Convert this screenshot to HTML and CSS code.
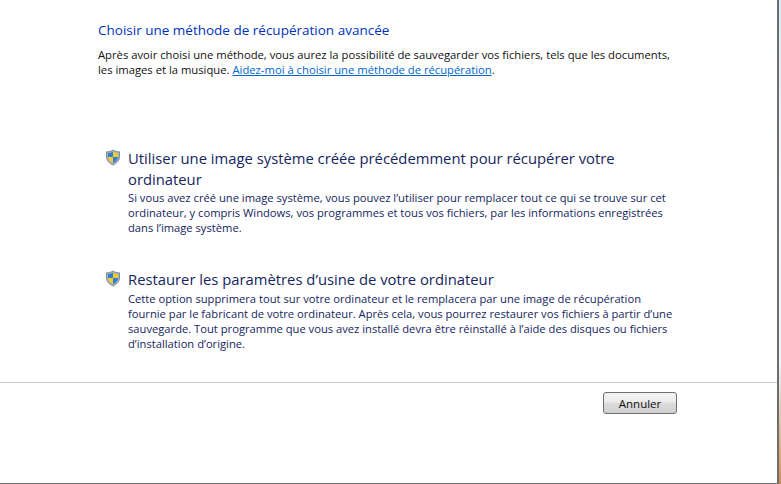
FILE: index.html
```html
<!DOCTYPE html>
<html lang="fr">
<head>
  <meta charset="UTF-8">
  <title>Récupération avancée</title>
  <link rel="stylesheet" href="styles.css">
</head>
<body>
  <div class="window">
    <div class="content">
      <h1>Choisir une méthode de récupération avancée</h1>
      <p class="intro">Après avoir choisi une méthode, vous aurez la possibilité de sauvegarder vos fichiers, tels que les documents,<br>les images et la musique. <a href="#">Aidez-moi à choisir une méthode de récupération</a>.</p>

      <div class="option first">
        <svg class="shield" viewBox="0 0 16 16" aria-hidden="true">
          <path d="M8 .5 C6 1.8 4 2.3 1.5 2.3 V7.5 C1.5 11 4.5 14 8 15.5 C11.5 14 14.500 11 14.500 7.500 V2.300 C12 2.300 10 1.800 8 .5 Z" fill="#a3aebb" stroke="#6f7d8c" stroke-width=".8"/>
          <path d="M8 2.200 V7.500 H3 V3.700 C4.800 3.600 6.500 3.100 8 2.200 Z" fill="#2f7fd6"/>
          <path d="M8 2.200 C9.500 3.100 11.200 3.600 13 3.700 V7.500 H8 Z" fill="#f4cc2e"/>
          <path d="M3 7.500 H8 V13.700 C5.500 12.500 3.200 10.300 3 7.500 Z" fill="#f4cc2e"/>
          <path d="M8 7.500 H13 C12.800 10.300 10.500 12.500 8 13.700 Z" fill="#2f7fd6"/>
        </svg>
        <div class="option-text">
          <h2 class="long">Utiliser une image système créée précédemment pour récupérer votre<br>ordinateur</h2>
          <p>Si vous avez créé une image système, vous pouvez l’utiliser pour remplacer tout ce qui se trouve sur cet<br>ordinateur, y compris Windows, vos programmes et tous vos fichiers, par les informations enregistrées<br>dans l’image système.</p>
        </div>
      </div>

      <div class="option">
        <svg class="shield" viewBox="0 0 16 16" aria-hidden="true">
          <path d="M8 .5 C6 1.8 4 2.3 1.5 2.3 V7.5 C1.5 11 4.5 14 8 15.5 C11.5 14 14.500 11 14.500 7.500 V2.300 C12 2.300 10 1.800 8 .5 Z" fill="#a3aebb" stroke="#6f7d8c" stroke-width=".8"/>
          <path d="M8 2.200 V7.500 H3 V3.700 C4.800 3.600 6.500 3.100 8 2.200 Z" fill="#2f7fd6"/>
          <path d="M8 2.200 C9.500 3.100 11.200 3.600 13 3.700 V7.500 H8 Z" fill="#f4cc2e"/>
          <path d="M3 7.500 H8 V13.700 C5.500 12.500 3.200 10.300 3 7.500 Z" fill="#f4cc2e"/>
          <path d="M8 7.500 H13 C12.800 10.300 10.500 12.500 8 13.700 Z" fill="#2f7fd6"/>
        </svg>
        <div class="option-text">
          <h2>Restaurer les paramètres d’usine de votre ordinateur</h2>
          <p>Cette option supprimera tout sur votre ordinateur et le remplacera par une image de récupération<br>fournie par le fabricant de votre ordinateur. Après cela, vous pourrez restaurer vos fichiers à partir d’une<br>sauvegarde. Tout programme que vous avez installé devra être réinstallé à l’aide des disques ou fichiers<br>d’installation d’origine.</p>
        </div>
      </div>
    </div>

    <div class="footer">
      <button class="btn">Annuler</button>
    </div>
  </div>
</body>
</html>
```

FILE: styles.css
```css
html, body {
  height: 100%;
}

body {
  margin: 0;
  background: linear-gradient(#dbeaf4 0%, #f4f9fb 40%, #eaf6fa 75%, #d9a878 95%, #c98f5a 100%);
  font-family: "Open Sans", "Noto Sans", sans-serif;
  color: #1a1a1a;
  overflow: hidden;
}

.window {
  width: 779px;
  height: 484px;
  box-sizing: border-box;
  border-right: 2px solid #6e6e6e;
  border-bottom: 1px solid #6e6e6e;
  background-color: white;
}

.content {
  height: 383px;
  padding: 20px 0 0 98px;
  box-sizing: border-box;
  border-bottom: 1px solid #cdcdcd;
}

h1 {
  font-size: 13.5px;
  font-weight: 400;
  line-height: 20px;
  margin: 0 0 7px;
  color: #0033bc;
}

.intro {
  font-size: 11.25px;
  line-height: 15px;
  margin: 0;
  color: #111;
}

.intro a {
  color: #0066cc;
}

.option {
  display: flex;
  margin: 34px 0 0 7px;
}

.option.first {
  margin-top: 71px;
}

.shield {
  width: 16px;
  height: 17px;
  margin: 1px 7px 0 0;
  flex-shrink: 0;
}

h2 {
  font-size: 14.8px;
  font-weight: 400;
  line-height: 21px;
  margin: 0 0 1px;
  color: #15255e;
}

h2.long {
  margin-bottom: 0;
}

.option-text p {
  font-size: 11.2px;
  line-height: 15px;
  margin: 0;
  color: #15255e;
}

.footer {
  display: flex;
  justify-content: flex-end;
  padding: 9px 100px 0 0;
}

.btn {
  width: 74px;
  height: 22px;
  padding: 0;
  font: inherit;
  font-size: 11.5px;
  color: #111;
  border: 1px solid #707070;
  border-radius: 3px;
  background: linear-gradient(#f2f2f2 0%, #ebebeb 45%, #dddddd 50%, #cfcfcf 100%);
}
```
